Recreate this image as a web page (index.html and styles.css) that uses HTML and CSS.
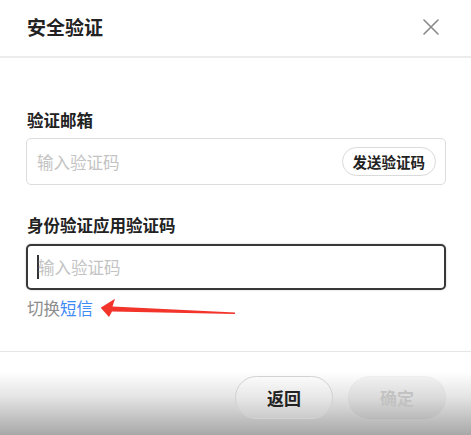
FILE: index.html
```html
<!DOCTYPE html>
<html lang="zh-CN">
<head>
<meta charset="utf-8">
<title>安全验证</title>
<link rel="stylesheet" href="styles.css">
</head>
<body>
<div class="dialog">
  <header class="head">
    <h1 class="title">安全验证</h1>
    <svg class="close" width="16" height="16" viewBox="0 0 16 16"><path d="M1 1L15 15M15 1L1 15" stroke="#8a8a8a" stroke-width="1.6" fill="none" stroke-linecap="round"/></svg>
  </header>
  <main class="body">
    <div class="label">验证邮箱</div>
    <div class="field">
      <span class="ph">输入验证码</span>
      <button class="send">发送验证码</button>
    </div>
    <div class="label label2">身份验证应用验证码</div>
    <div class="field focus">
      <span class="caret"></span><span class="ph">输入验证码</span>
    </div>
    <div class="switch">切换<a class="link">短信</a>
      <svg class="arrow" width="145" height="26" viewBox="0 0 145 26"><path d="M3.7 12.7 L18 3.8 L15.5 11.4 L138 17.5 L138 18.9 L15 16.4 L12 22 Z" fill="#f2342b"/></svg>
    </div>
  </main>
  <footer class="foot">
    <button class="btn back">返回</button>
    <button class="btn ok">确定</button>
  </footer>
</div>
</body>
</html>
```
FILE: styles.css
```css
* { box-sizing: border-box; }
html, body { margin: 0; padding: 0; }
body {
  width: 471px;
  height: 435px;
  overflow: hidden;
  background: #fff;
  font-family: "Noto Sans CJK SC", "Noto Sans", sans-serif;
  color: #222;
}
.dialog { display: flex; flex-direction: column; height: 435px; }
.head {
  height: 58px;
  display: flex;
  align-items: center;
  justify-content: space-between;
  padding: 0 32px 2px 27px;
  border-bottom: 2px solid #ececec;
}
.title {
  margin: 0;
  font-size: 19px;
  font-weight: 700;
  line-height: 24px;
  color: #222;
}
.close { display: block; }
.body {
  padding: 51px 25px 0 26px;
  height: 294px;
  border-bottom: 1px solid #e6e6e6;
}
.label {
  font-size: 16.5px;
  font-weight: 700;
  line-height: 22px;
  margin-bottom: 7px;
  padding-left: 1px;
}
.label2 { margin-top: 29px; margin-bottom: 8px; }
.field {
  height: 47px;
  border: 1px solid #dcdcdc;
  border-radius: 5px;
  display: flex;
  align-items: center;
  justify-content: space-between;
  padding: 0 9px 0 10px;
}
.field.focus {
  height: 46px;
  border: 2px solid #383838;
  justify-content: flex-start;
  padding-left: 9px;
  box-shadow: 0 0 2px rgba(0,0,0,0.25);
}
.ph {
  font-size: 16.5px;
  color: #c3c3c3;
  line-height: 22px;
}
.caret {
  width: 2px;
  height: 24px;
  background: #333;
  margin-right: -1px;
}
.send {
  height: 29px;
  padding: 0 10px;
  border: 1px solid #dadada;
  border-radius: 15px;
  background: #fff;
  font-family: inherit;
  font-size: 14.5px;
  font-weight: 700;
  color: #222;
  line-height: 20px;
}
.switch {
  position: relative;
  margin-top: 7px;
  font-size: 16.5px;
  line-height: 22px;
  color: #8c8c8c;
  padding-left: 1px;
}
.link { color: #3e8bf5; }
.arrow { position: absolute; left: 71px; top: -2px; }
.foot {
  flex: 1;
  display: flex;
  justify-content: flex-end;
  align-items: flex-start;
  gap: 15px;
  padding: 24px 25px 0 0;
  background: linear-gradient(#ffffff 0px, #ffffff 20px, #e4e4e4 45px, #c4c4c4 65px, #a8a8a8 100%);
}
.btn {
  width: 98px;
  height: 43px;
  border-radius: 22px;
  font-family: inherit;
  font-size: 17px;
  font-weight: 700;
  line-height: 22px;
}
.back {
  border: 1px solid #d2d2d2;
  background: rgba(255,255,255,0.15);
  color: #222;
}
.ok {
  border: 1px solid rgba(0,0,0,0.02);
  background: rgba(0,0,0,0.035);
  color: #c2c2c2;
}
```
